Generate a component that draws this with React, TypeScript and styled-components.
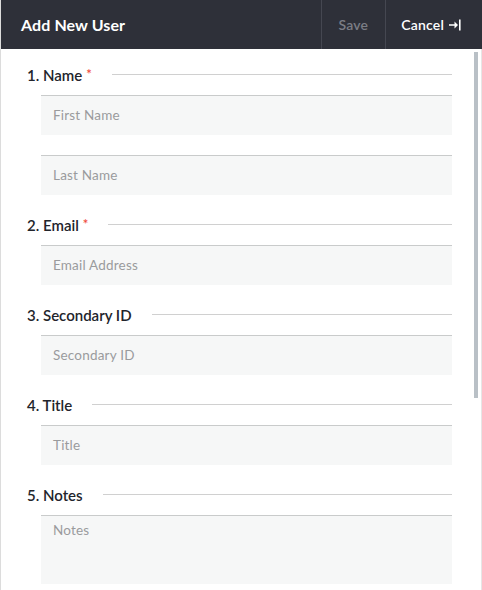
import React from 'react';
import styled, { createGlobalStyle } from 'styled-components';

const GlobalStyle = createGlobalStyle`
  html, body {
    margin: 0;
    padding: 0;
    background: #fff;
  }
  body {
    font-family: Lato, "Open Sans", Arial, sans-serif;
    -webkit-font-smoothing: antialiased;
  }
`;

const Panel = styled.div`
  width: 482px;
  height: 590px;
  box-sizing: border-box;
  border-left: 1px solid #dcdcdc;
  display: flex;
  flex-direction: column;
  position: relative;
  overflow: hidden;
`;

const Header = styled.div`
  height: 49px;
  flex-shrink: 0;
  background: #2e3039;
  display: flex;
  align-items: stretch;
`;

const Title = styled.div`
  flex: 1;
  display: flex;
  align-items: center;
  padding-left: 20px;
  color: #fff;
  font-size: 16px;
  font-weight: 700;
  letter-spacing: 0.1px;
`;

const HeaderBtn = styled.div<{ muted?: boolean }>`
  display: flex;
  align-items: center;
  gap: 5px;
  border-left: 1px solid #454751;
  padding: ${p => (p.muted ? '0 17px 0 16px' : '0 21px 0 15px')};
  color: ${p => (p.muted ? '#7b7d85' : '#fff')};
  font-size: 14px;
  font-weight: 600;
  letter-spacing: 0.2px;
`;

const Body = styled.div`
  flex: 1;
  padding: 16px 29px 0 26px;
  border-right: 1px solid #e6e6e6;
`;

const Section = styled.div`
  margin-bottom: 20px;
`;

const LabelRow = styled.div`
  height: 20px;
  display: flex;
  align-items: center;
  margin-bottom: 10px;
`;

const Label = styled.div`
  font-size: 15px;
  font-weight: 600;
  color: #22242b;
  white-space: nowrap;
`;

const Req = styled.span`
  color: #ef4b3c;
  font-size: 13px;
  margin-left: 4px;
  position: relative;
  top: -2px;
`;

const Rule = styled.div`
  flex: 1;
  height: 1px;
  background: #d0d0d0;
  margin-left: 20px;
  margin-top: -1px;
`;

const Fields = styled.div`
  display: flex;
  flex-direction: column;
  gap: 20px;
  margin-left: 14px;
`;

const Field = styled.div<{ tall?: boolean }>`
  height: ${p => (p.tall ? '69px' : '40px')};
  box-sizing: border-box;
  border-top: 1px solid #c9cbcb;
  background: #f6f7f7;
  display: flex;
  align-items: ${p => (p.tall ? 'flex-start' : 'center')};
  padding: ${p => (p.tall ? '6px 12px' : '0 12px 2px')};
  color: #9a9b9d;
  font-size: 13.5px;
  letter-spacing: 0.2px;
`;

const Thumb = styled.div`
  position: absolute;
  right: 4px;
  top: 52px;
  width: 4px;
  height: 346px;
  background: #b9c0c6;
`;

const CancelIcon = () => (
  <svg width="12" height="12" viewBox="0 0 12 12">
    <path d="M0 5.2h5.5V2.5L9 6l-3.5 3.5V6.8H0z" fill="#fff" />
    <rect x="10" y="0.5" width="1.6" height="11" fill="#fff" />
  </svg>
);

const sections = [
  { label: '1. Name', req: true, fields: ['First Name', 'Last Name'] },
  { label: '2. Email', req: true, fields: ['Email Address'] },
  { label: '3. Secondary ID', fields: ['Secondary ID'] },
  { label: '4. Title', fields: ['Title'] },
];

export default function App() {
  return (
    <>
      <GlobalStyle />
      <Panel>
        <Header>
          <Title>Add New User</Title>
          <HeaderBtn muted>Save</HeaderBtn>
          <HeaderBtn>
            Cancel <CancelIcon />
          </HeaderBtn>
        </Header>
        <Body>
          {sections.map(s => (
            <Section key={s.label}>
              <LabelRow>
                <Label>
                  {s.label}
                  {s.req && <Req>*</Req>}
                </Label>
                <Rule />
              </LabelRow>
              <Fields>
                {s.fields.map(f => (
                  <Field key={f}>{f}</Field>
                ))}
              </Fields>
            </Section>
          ))}
          <Section>
            <LabelRow>
              <Label>5. Notes</Label>
              <Rule />
            </LabelRow>
            <Fields>
              <Field tall>Notes</Field>
            </Fields>
          </Section>
        </Body>
        <Thumb />
      </Panel>
    </>
  );
}
